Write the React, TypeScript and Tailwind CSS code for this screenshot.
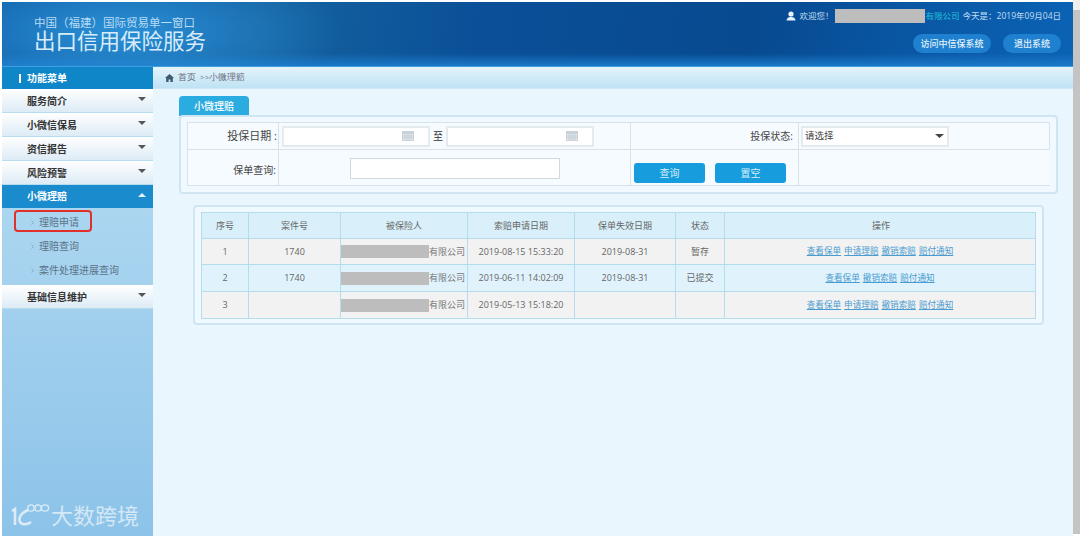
import React from "react";

const font = { fontFamily: '"Open Sans", "Noto Sans CJK SC", sans-serif' };

function Caret({ up = false, color = "#555", w = 8, h = 4 }: { up?: boolean; color?: string; w?: number; h?: number }) {
  return (
    <svg width={w} height={h} viewBox="0 0 8 4" preserveAspectRatio="none" className="block">
      <path d={up ? "M0 4 L4 0 L8 4 Z" : "M0 0 L8 0 L4 4 Z"} fill={color} />
    </svg>
  );
}

function NavItem({ label }: { label: string }) {
  return (
    <div className="h-6 flex items-center justify-between pl-[25px] pr-[7px] bg-gradient-to-b from-white to-[#dcebf5] border-b border-[#b6dcef] text-[10px] font-bold text-[#333]">
      <span className="pt-[2px]">{label}</span>
      <span className="-mt-1"><Caret /></span>
    </div>
  );
}

function SubItem({ label, boxed }: { label: string; boxed?: boolean }) {
  return (
    <div className="h-6 flex items-center pl-[29px] text-[10px] text-[#5a7488] relative">
      {boxed && <div className="absolute left-[12px] top-0 w-[78px] h-[22px] border-[2.5px] border-[#e0302c] rounded-[4px]" />}
      <svg width="3" height="5" viewBox="0 0 3 5" className="mr-[5px]"><path d="M0.5 0.5 L2.5 2.5 L0.5 4.5" stroke="#8fa8b8" fill="none" /></svg>
      <span>{label}</span>
    </div>
  );
}

function CalendarIcon() {
  return (
    <svg width="12" height="10" viewBox="0 0 12 10" className="block">
      <rect x="0" y="0" width="12" height="10" fill="#c8d2d8" />
      <rect x="1" y="3" width="10" height="6" fill="#e6ecef" />
      <path d="M1 5H11M1 7H11M3 3V9M5 3V9M7 3V9M9 3V9" stroke="#b8c4cb" strokeWidth="0.6" />
    </svg>
  );
}

function DateInput() {
  return (
    <div className="w-[148px] h-[21px] bg-white border-2 border-[#e4ebef] flex items-center justify-end pr-[14px]">
      <CalendarIcon />
    </div>
  );
}

const cols = "grid grid-cols-[47px_92px_127px_107px_101px_49px_312px]";

function Cell({ children, className = "" }: { children?: React.ReactNode; className?: string }) {
  return (
    <div className={`flex items-center justify-center border-r border-[#b5dced] last:border-r-0 ${className}`}>{children}</div>
  );
}

const L = ({ children }: { children: React.ReactNode }) => (
  <a className="text-[#4a9bd0] underline text-[8.6px]">{children}</a>
);

function Row({ n, id, bar, claim, exp, st, links, bg, h }: { n: string; id: string; bar: number; claim: string; exp: string; st: string; links: string[]; bg: string; h: string }) {
  return (
    <div className={`${cols} ${bg} ${h} border-b border-[#b5dced] last:border-b-0`}>
      <Cell>{n}</Cell>
      <Cell>{id}</Cell>
      <Cell className="!justify-start">
        <span className="h-[13px] bg-[#bdbdbd] shrink-0" style={{ width: bar }} />
        <span className="text-[#777] whitespace-nowrap">有限公司</span>
      </Cell>
      <Cell>{claim}</Cell>
      <Cell>{exp}</Cell>
      <Cell>{st}</Cell>
      <Cell className="gap-[3px] pr-[2px]">{links.map((l) => <L key={l}>{l}</L>)}</Cell>
    </div>
  );
}

export default function App() {
  return (
    <div style={font} className="w-[1080px] h-[536px] overflow-hidden bg-white flex pt-[2px] pl-[2px]">
      <div className="w-[1071px] h-[534px] flex flex-col shrink-0">
        {/* Header */}
        <header className="h-[65px] shrink-0 bg-[radial-gradient(ellipse_220px_70px_at_120px_30px,#2a8fd6_0%,rgba(42,143,214,0)_100%),linear-gradient(180deg,rgba(10,80,150,0)_80%,#1a78c8_100%),linear-gradient(100deg,#0f5ea6_0%,#15629f_25%,#0a4f98_45%,#074a90_70%,#0a5aa8_88%,#0b62b4_100%)] border-b border-[#3f9fdc] flex justify-between text-white">
          <div className="pl-[32px] pt-[13px]">
            <div className="text-[11.5px] leading-[15px] text-[#b9dcf3] whitespace-nowrap">中国（福建）国际贸易单一窗口</div>
            <div className="text-[21.5px] leading-[22px] text-[#d7ecfa] whitespace-nowrap">出口信用保险服务</div>
          </div>
          <div className="flex flex-col items-end pr-[12px] pt-[7px]">
            <div className="flex items-center h-[14px] text-[8.5px] text-[#c3def3] whitespace-nowrap">
              <svg width="10" height="10" viewBox="0 0 10 10" className="mr-[4px]">
                <circle cx="5" cy="3" r="2.6" fill="#e8f3fb" />
                <path d="M0.5 9.5 C1 6.5 3 6 5 6 C7 6 9 6.5 9.5 9.5 Z" fill="#e8f3fb" />
              </svg>
              <span className="mr-px">欢迎您！</span>
              <span className="w-[90px] h-[14px] bg-[#bdbdbd]" />
              <span className="text-[#21c0d8] ml-px">有限公司</span>
              <span className="ml-[3px]">今天是：2019年09月04日</span>
            </div>
            <div className="flex gap-[12px] mt-[11px]">
              <div className="w-[78px] h-[19px] rounded-full bg-[#1f80d0] text-[9px] font-medium flex items-center justify-center text-[#e3f1fb]">访问中信保系统</div>
              <div className="w-[58px] h-[19px] rounded-full bg-[#1f80d0] text-[9px] font-medium flex items-center justify-center text-[#e3f1fb]">退出系统</div>
            </div>
          </div>
        </header>

        <div className="flex-1 flex min-h-0">
          {/* Sidebar */}
          <aside className="w-[151px] shrink-0 bg-gradient-to-b from-[#b9def3] to-[#8cc3e9] flex flex-col">
            <div className="h-[22px] bg-[#0f86c8] text-white text-[10px] font-bold flex items-center pl-[17px]">
              <span className="w-[2px] h-[9px] bg-white mr-[6px]" />功能菜单
            </div>
            <NavItem label="服务简介" />
            <NavItem label="小微信保易" />
            <NavItem label="资信报告" />
            <NavItem label="风险预警" />
            <div className="h-[23px] flex items-center justify-between pl-[25px] pr-[7px] bg-[#1a8bcd] text-[10px] font-bold text-white">
              <span>小微理赔</span>
              <span className="-mt-1"><Caret up color="#e5f2fb" /></span>
            </div>
            <div className="pt-[2px] pb-[3px]">
              <SubItem label="理赔申请" boxed />
              <SubItem label="理赔查询" />
              <SubItem label="案件处理进展查询" />
            </div>
            <NavItem label="基础信息维护" />
            <div className="mt-auto h-[40px] flex items-center pl-[7px] pb-[3px] text-[#dcecf7]">
              <svg width="43" height="26" viewBox="0 0 43 26" fill="none" stroke="#dcecf7" className="shrink-0">
                <path d="M3 9 L6 7 V23" strokeWidth="2.6" />
                <path d="M19 8 C12 11 9 16 11 20 C13 23 18 23 22 20" strokeWidth="2.6" />
                <circle cx="22" cy="6" r="3.2" strokeWidth="1.3" />
                <ellipse cx="29" cy="6" rx="3.2" ry="3.2" strokeWidth="1.3" />
                <ellipse cx="36" cy="6" rx="3.6" ry="3.2" strokeWidth="1.3" />
              </svg>
              <span className="text-[22px] leading-none -ml-[1px] whitespace-nowrap opacity-90">大数跨境</span>
            </div>
          </aside>

          {/* Main */}
          <main className="flex-1 flex flex-col bg-[#eaf6fe] min-w-0">
            <div className="h-[22px] shrink-0 bg-gradient-to-b from-[#e4f3fb] to-[#bfe3f4] flex items-center pl-[12px] text-[8.5px] text-[#667] border-b border-[#cfe8f5]">
              <svg width="9" height="8" viewBox="0 0 9 8" className="mr-[4px]"><path d="M4.5 0 L9 4 H7.8 V8 H5.4 V5.4 H3.6 V8 H1.2 V4 H0 Z" fill="#3c5a6e" /></svg>
              <span className="font-serif whitespace-pre">首页  &gt;&gt;小微理赔</span>
            </div>

            <div className="pl-[26px] pt-[7px]">
              <div className="w-[70px] h-[20px] bg-[#2bace0] rounded-t-[4px] text-white text-[10px] font-medium flex items-center justify-center">小微理赔</div>
              {/* Filter panel */}
              <div className="w-[879px] h-[79px] border-2 border-[#cfe6f2] rounded-[4px] bg-[#f0f9ff] px-[6px] py-[5px] -mt-px">
                <div className="w-[863px] h-[64px] bg-[#f6fbff]">
                  <div className="grid grid-cols-[91px_352px_168px_252px] h-[28px] border border-[#d9e2e8] text-[10px] text-[#444]">
                    <div className="flex items-center justify-end pr-[1px] pt-px border-r border-[#d9e2e8] text-[11px]">投保日期 :</div>
                    <div className="flex items-center pl-[3px] gap-[3px] border-r border-[#d9e2e8]">
                      <DateInput />
                      <span className="text-[10px] w-[10px] text-center text-[#333]">至</span>
                      <DateInput />
                    </div>
                    <div className="flex items-center justify-end pr-[5px] pt-px border-r border-[#d9e2e8]">投保状态:</div>
                    <div className="flex items-center pl-[2px]">
                      <div className="w-[148px] h-[21px] bg-white border-2 border-[#e4ebef] flex items-center justify-between pl-[2px] pr-[3px] text-[9.5px]">
                        <span>请选择</span><Caret color="#444" w={9} h={4} />
                      </div>
                    </div>
                  </div>
                  <div className="grid grid-cols-[91px_352px_168px_252px] h-[36px] text-[10px] text-[#444] border-b border-l border-[#d9e2e8]">
                    <div className="flex items-center justify-end pr-[2px] pt-[5px] border-r border-[#d9e2e8]">保单查询:</div>
                    <div className="flex items-center pl-[71px] pt-px border-r border-[#d9e2e8]">
                      <div className="w-[210px] h-[21px] bg-white border border-[#cfd9df]" />
                    </div>
                    <div className="flex items-start pt-[13px] pl-[3px] gap-[10px] border-r border-[#d9e2e8]">
                      <div className="w-[71px] h-[20px] shrink-0 rounded-[3px] bg-[#179ddd] text-[#d5eefa] text-[10px] flex items-center justify-center">查询</div>
                      <div className="w-[71px] h-[20px] shrink-0 rounded-[3px] bg-[#179ddd] text-[#d5eefa] text-[10px] flex items-center justify-center">置空</div>
                    </div>
                    <div />
                  </div>
                </div>
              </div>

              {/* Result table */}
              <div className="ml-[14px] mt-[11px] w-[851px] h-[120px] border-2 border-[#cfe6f2] rounded-[4px] bg-[#f0f9ff] px-[6px] pt-[5px]">
                <div className="w-[835px] border border-[#b5dced] text-[9px] text-[#666]">
                  <div className={`${cols} h-[26px] bg-[#d9f0fb] border-b border-[#b5dced]`}>
                    {["序号", "案件号", "被保险人", "索赔申请日期", "保单失效日期", "状态", "操作"].map((t) => <Cell key={t}>{t}</Cell>)}
                  </div>
                  <Row n="1" id="1740" bar={88} claim="2019-08-15 15:33:20" exp="2019-08-31" st="暂存" links={["查看保单", "申请理赔", "撤销索赔", "赔付通知"]} bg="bg-[#f2f2f2]" h="h-[26px]" />
                  <Row n="2" id="1740" bar={88} claim="2019-06-11 14:02:09" exp="2019-08-31" st="已提交" links={["查看保单", "撤销索赔", "赔付通知"]} bg="bg-[#e0f3fc]" h="h-[27px]" />
                  <Row n="3" id="" bar={88} claim="2019-05-13 15:18:20" exp="" st="" links={["查看保单", "申请理赔", "撤销索赔", "赔付通知"]} bg="bg-[#f2f2f2]" h="h-[26px]" />
                </div>
              </div>
            </div>
          </main>
        </div>
      </div>
      {/* Scrollbar */}
      <div className="w-[7px] h-full bg-[#c4c4c4] shrink-0 -mt-[2px] border-t-[10px] border-[#eee]" />
    </div>
  );
}
